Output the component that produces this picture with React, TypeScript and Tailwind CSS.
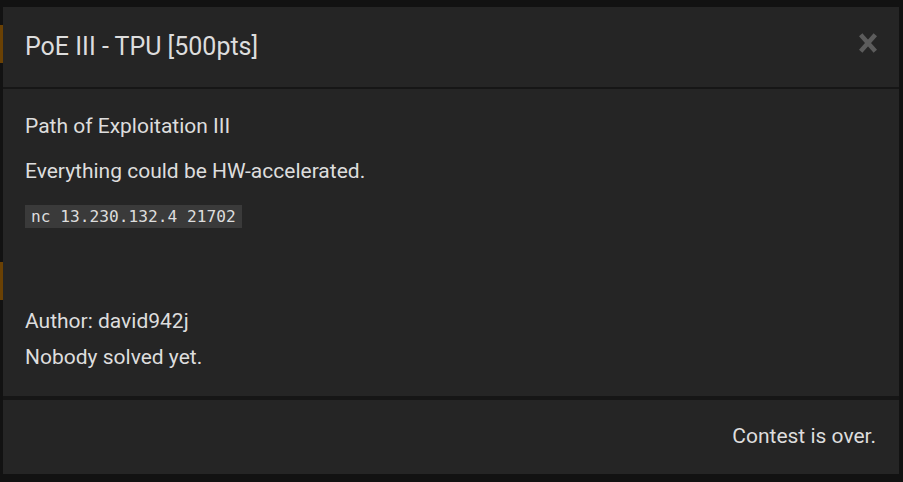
import React from "react";

export default function App() {
  const font = { fontFamily: "Roboto, 'Liberation Sans', sans-serif" };
  return (
    <div className="relative w-[903px] h-[482px] bg-[#121212] overflow-hidden" style={font}>
      <div className="absolute left-0 top-[25px] w-[3px] h-[38px] bg-[#6a4104]" />
      <div className="absolute left-0 top-[262px] w-[3px] h-[38px] bg-[#6a4104]" />
      <div className="absolute left-[3px] top-[7px] w-[896px] h-[467px] flex flex-col bg-[#252525]">
        <div className="h-[80px] flex items-center justify-between pl-[22px] pr-[22px] shrink-0">
          <div className="text-[25px] text-[#dddddd] leading-[30px]">PoE III - TPU [500pts]</div>
          <svg width="18" height="20" viewBox="0 0 18 20" className="mt-[-8px]">
            <path d="M3.2 3.5 L14.8 16.5 M14.8 3.5 L3.2 16.5" stroke="#5c5c5c" strokeWidth="4.6" strokeLinecap="square" />
          </svg>
        </div>
        <div className="h-[2px] bg-[#161616] shrink-0" />
        <div className="flex-1 flex flex-col pl-[22px] pt-[24px] text-[21px] text-[#dddddd]">
          <div className="h-[27px] leading-[27px]">Path of Exploitation III</div>
          <div className="h-[27px] leading-[27px] mt-[18px]">Everything could be HW-accelerated.</div>
          <div className="h-[27px] mt-[18px] flex items-center">
            <span
              className="h-[23px] px-[6px] bg-[#3a3a3a] text-[#dddddd] text-[16.2px] leading-[23px]"
              style={{ fontFamily: "'DejaVu Sans Mono', monospace" }}
            >
              nc 13.230.132.4 21702
            </span>
          </div>
          <div className="h-[27px] leading-[27px] mt-[78px]">Author: david942j</div>
          <div className="h-[27px] leading-[27px] mt-[9px]">Nobody solved yet.</div>
        </div>
        <div className="h-[4px] bg-[#161616] shrink-0" />
        <div className="h-[74px] flex items-center justify-end pr-[23px] shrink-0 text-[21px] text-[#dddddd]">
          Contest is over.
        </div>
      </div>
    </div>
  );
}
